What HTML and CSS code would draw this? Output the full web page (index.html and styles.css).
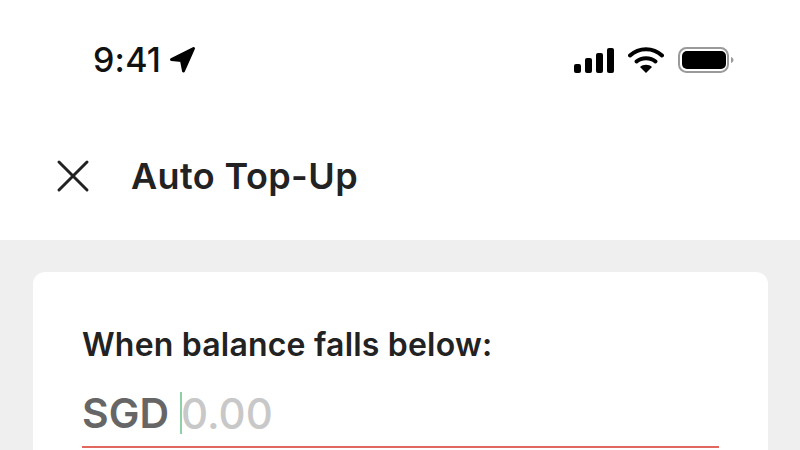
FILE: index.html
```html
<!DOCTYPE html>
<html lang="en">
<head>
  <meta charset="UTF-8">
  <title>Auto Top-Up</title>
  <link rel="stylesheet" href="styles.css">
</head>
<body>

<div class="statusBar">
  <div class="statusLeft">
    <span class="clock">9:41</span>
    <svg class="arrowIcon" width="28" height="28" viewBox="0 0 28 28">
      <path d="M3.500 13.500 25.500 2.500 15.500 25 13.500 14.500z" fill="#000" stroke="#000" stroke-width="3" stroke-linejoin="round"/>
    </svg>
  </div>
  <div class="statusRight">
    <svg width="40" height="25" viewBox="0 0 40 25">
      <rect x="0" y="16" width="7" height="9" rx="2" fill="#000"/>
      <rect x="11" y="10" width="7" height="15" rx="2" fill="#000"/>
      <rect x="22" y="5" width="7" height="20" rx="2" fill="#000"/>
      <rect x="33" y="0" width="7" height="25" rx="2" fill="#000"/>
    </svg>
    <svg width="36" height="26" viewBox="0 0 36 26">
      <path d="M2 8.500C11 0 25 0 34 8.500" fill="none" stroke="#000" stroke-width="4" stroke-linecap="round"/>
      <path d="M8.500 14.500C13.500 10 22.500 10 27.500 14.500" fill="none" stroke="#000" stroke-width="4" stroke-linecap="round"/>
      <path d="M12 20c3-3 9-3 12 0l-6 6z" fill="#000"/>
    </svg>
    <svg width="57" height="26" viewBox="0 0 57 26">
      <rect x="1" y="1" width="49" height="24" rx="7.500" fill="#fff" stroke="#9a9a9a" stroke-width="2"/>
      <rect x="4" y="4" width="44" height="18" rx="5" fill="#000"/>
      <path d="M53 10c1.500.5 2.500 1.700 2.500 3s-1 2.500-2.500 3z" fill="#9a9a9a"/>
    </svg>
  </div>
</div>

<div class="header">
  <svg class="closeIcon" width="34" height="34" viewBox="0 0 34 34">
    <path d="M3 3 31 31M31 3 3 31" stroke="#222" stroke-width="3" stroke-linecap="round" fill="none"/>
  </svg>
  <h1 class="title">Auto Top-Up</h1>
</div>

<div class="content">
  <div class="card">
    <p class="fieldLabel">When balance falls below:</p>
    <div class="amountRow">
      <span class="currency">SGD</span>
      <span class="caret"></span>
      <span class="placeholder">0.00</span>
    </div>
  </div>
</div>

</body>
</html>
```

FILE: styles.css
```css
html, body {
  margin: 0;
  height: 450px;
  overflow: hidden;
}

body {
  background-color: white;
  font-family: Inter, "Liberation Sans", sans-serif;
  color: #222;
}

.statusBar {
  height: 120px;
  box-sizing: border-box;
  padding: 39px 65px 0 93px;
  display: flex;
  justify-content: space-between;
  align-items: flex-start;
}

.statusLeft {
  display: flex;
  align-items: center;
  gap: 7px;
}

.clock {
  font-size: 34px;
  line-height: 42px;
  font-weight: 500;
  letter-spacing: 0.2px;
  color: #111;
}

.statusRight {
  display: flex;
  align-items: center;
  gap: 14px;
  height: 42px;
}

.header {
  height: 120px;
  box-sizing: border-box;
  padding: 0 0 9px 56px;
  display: flex;
  align-items: center;
  gap: 41px;
}

.title {
  margin: 0;
  font-size: 36px;
  line-height: 40px;
  font-weight: 600;
  letter-spacing: 0.4px;
}

.content {
  background-color: #efefef;
  padding: 32px 32px 0 33px;
  height: 210px;
  box-sizing: border-box;
  overflow: hidden;
}

.card {
  background-color: white;
  border-radius: 12px;
  height: 300px;
  box-sizing: border-box;
  padding: 55px 49px 0;
}

.fieldLabel {
  margin: 0;
  font-size: 32px;
  line-height: 36px;
  font-weight: 600;
  letter-spacing: 0.2px;
}

.amountRow {
  margin-top: 13px;
  height: 72px;
  box-sizing: border-box;
  padding-top: 4px;
  border-bottom: 2px solid #e0685f;
  display: flex;
  align-items: center;
  font-size: 41px;
  font-weight: 600;
}

.currency {
  color: #666;
}

.caret {
  width: 2px;
  height: 42px;
  margin-left: 11px;
  background-color: #8fd0a8;
}

.placeholder {
  color: #c8c8c8;
  font-size: 42px;
  font-weight: 500;
  margin-left: -1px;
}
```
